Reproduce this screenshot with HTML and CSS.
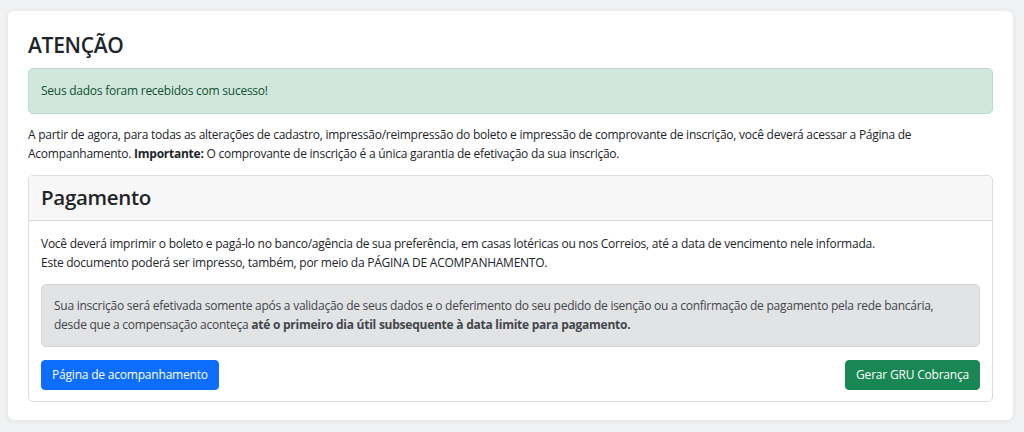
FILE: index.html
```html
<!DOCTYPE html>
<html lang="pt-BR">
<head>
    <meta charset="utf-8">
    <title>Inscrição - Atenção</title>
    <meta name="viewport" content="width=device-width, initial-scale=1.0">
    <link rel="stylesheet" href="styles.css">
</head>
<body>
    <div class="page-card">
        <h3 class="title">ATENÇÃO</h3>

        <div class="alert alert-success">Seus dados foram recebidos com sucesso!</div>

        <p class="intro">A partir de agora, para todas as alterações de cadastro, impressão/reimpressão do boleto e impressão de comprovante de inscrição, você deverá acessar a Página de Acompanhamento. <strong>Importante:</strong> O comprovante de inscrição é a única garantia de efetivação da sua inscrição.</p>

        <div class="card">
            <div class="card-header">
                <h4>Pagamento</h4>
            </div>
            <div class="card-body">
                <p>Você deverá imprimir o boleto e pagá-lo no banco/agência de sua preferência, em casas lotéricas ou nos Correios, até a data de vencimento nele informada.<br>
                Este documento poderá ser impresso, também, por meio da PÁGINA DE ACOMPANHAMENTO.</p>

                <div class="alert alert-secondary">Sua inscrição será efetivada somente após a validação de seus dados e o deferimento do seu pedido de isenção ou a confirmação de pagamento pela rede bancária, desde que a compensação aconteça <strong>até o primeiro dia útil subsequente à data limite para pagamento.</strong></div>

                <div class="actions">
                    <button class="btn btn-primary">Página de acompanhamento</button>
                    <button class="btn btn-success">Gerar GRU Cobrança</button>
                </div>
            </div>
        </div>
    </div>
</body>
</html>
```

FILE: styles.css
```css
body {
    font-family: "Open Sans", "Noto Sans", sans-serif;
    font-size: 12px;
    line-height: 19.5px;
    letter-spacing: -0.25px;
    color: #212529;
    background-color: #f1f2f4;
    margin: 0;
    padding: 11px 11px 12px 8px;
}
.page-card {
    background: #fff;
    border-radius: 6px;
    box-shadow: 0 1px 6px rgba(0, 0, 0, 0.08);
    padding: 20px 20px 18px 20px;
}
.title {
    margin: 0 0 9px 0;
    font-size: 21px;
    font-weight: 600;
    line-height: 28px;
    letter-spacing: -0.3px;
}
.alert {
    border: 1px solid transparent;
    border-radius: 5px;
}
.alert-success {
    background-color: #d1e7dd;
    border-color: #badbcc;
    color: #0f5132;
    padding: 12px 12px;
}
.alert-secondary {
    background-color: #e2e3e5;
    border-color: #d3d6d8;
    color: #41464b;
    padding: 11px 12px;
}
.intro {
    margin: 11px 0 11px 0;
}
strong {
    font-weight: 700;
}
.card {
    border: 1px solid #dcdcdc;
    border-radius: 5px;
}
.card-header {
    background-color: #f7f7f7;
    border-bottom: 1px solid #dcdcdc;
    border-radius: 5px 5px 0 0;
    padding: 9px 12px 10px 12px;
}
.card-header h4 {
    margin: 0;
    font-size: 20.5px;
    font-weight: 600;
    line-height: 25px;
    letter-spacing: -0.3px;
}
.card-body {
    padding: 13px 12px 11px 12px;
}
.card-body p {
    margin: 0 0 11px 0;
}
.actions {
    display: flex;
    justify-content: space-between;
    margin-top: 13px;
}
.btn {
    font-family: inherit;
    font-size: 12px;
    line-height: 19.5px;
    letter-spacing: -0.2px;
    color: #fff;
    border: 1px solid transparent;
    border-radius: 4px;
    padding: 4px 10px;
    height: 30px;
    cursor: pointer;
}
.btn-primary {
    background-color: #0d6efd;
    border-color: #0d6efd;
}
.btn-success {
    background-color: #198754;
    border-color: #198754;
}
```
